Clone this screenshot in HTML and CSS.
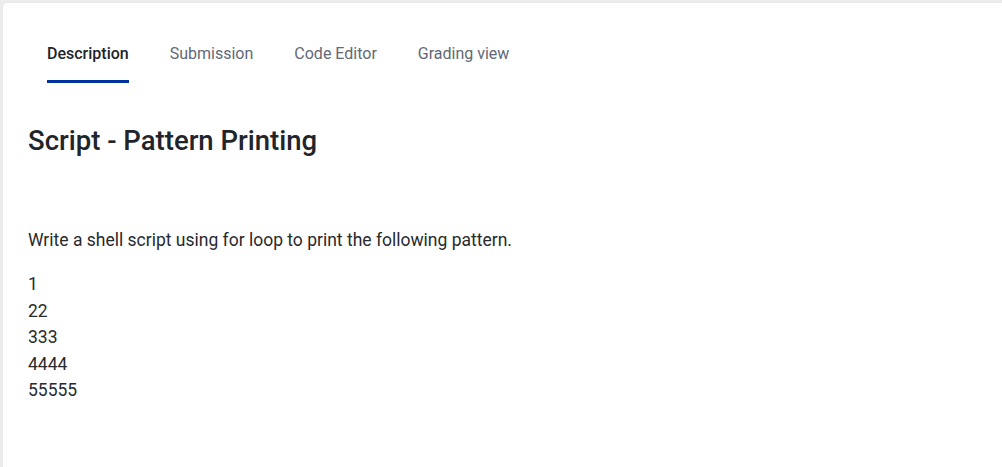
FILE: index.html
```html
<!DOCTYPE html>
<html>
<head>
<meta charset="utf-8">
<link rel="stylesheet" href="styles.css">
</head>
<body>
<div class="card">
  <nav class="tabs">
    <div class="tab active">Description</div>
    <div class="tab">Submission</div>
    <div class="tab">Code Editor</div>
    <div class="tab">Grading view</div>
  </nav>
  <div class="content">
    <h1 class="title">Script - Pattern Printing</h1>
    <p class="para">Write a shell script using for loop to print the following pattern.</p>
    <p class="pattern">1<br>22<br>333<br>4444<br>55555</p>
  </div>
</div>
</body>
</html>
```
FILE: styles.css
```css
html, body {
  margin: 0;
  height: 100%;
}
body {
  background: #ececec;
  font-family: Roboto, "Noto Sans", sans-serif;
  overflow: hidden;
}
.card {
  margin: 3px 0 0 3px;
  height: calc(100% - 3px);
  background: #fff;
  border-radius: 4px 0 0 0;
  box-shadow: 0 0 2px rgba(0,0,0,0.06);
}
.tabs {
  display: flex;
  gap: 1px;
  padding: 27px 0 0 24px;
}
.tab {
  font-size: 16px;
  line-height: 19px;
  padding: 14px 20px 17px;
  color: #626877;
}
.tab.active {
  color: #212529;
  font-weight: 500;
  padding-bottom: 20px;
  position: relative;
}
.tab.active::after {
  content: "";
  position: absolute;
  left: 20px;
  right: 20px;
  bottom: 0;
  height: 3px;
  background: #0033a0;
}
.content {
  padding: 0 0 0 25px;
  color: #282a2e;
}
.title {
  margin: 41px 0 0;
  font-size: 27.5px;
  line-height: 34px;
  font-weight: 500;
  color: #212529;
}
.para {
  margin: 69px 0 0;
  font-size: 17.5px;
  line-height: 26.25px;
}
.pattern {
  margin: 18px 0 0;
  font-size: 17.5px;
  line-height: 26.5px;
}
```
